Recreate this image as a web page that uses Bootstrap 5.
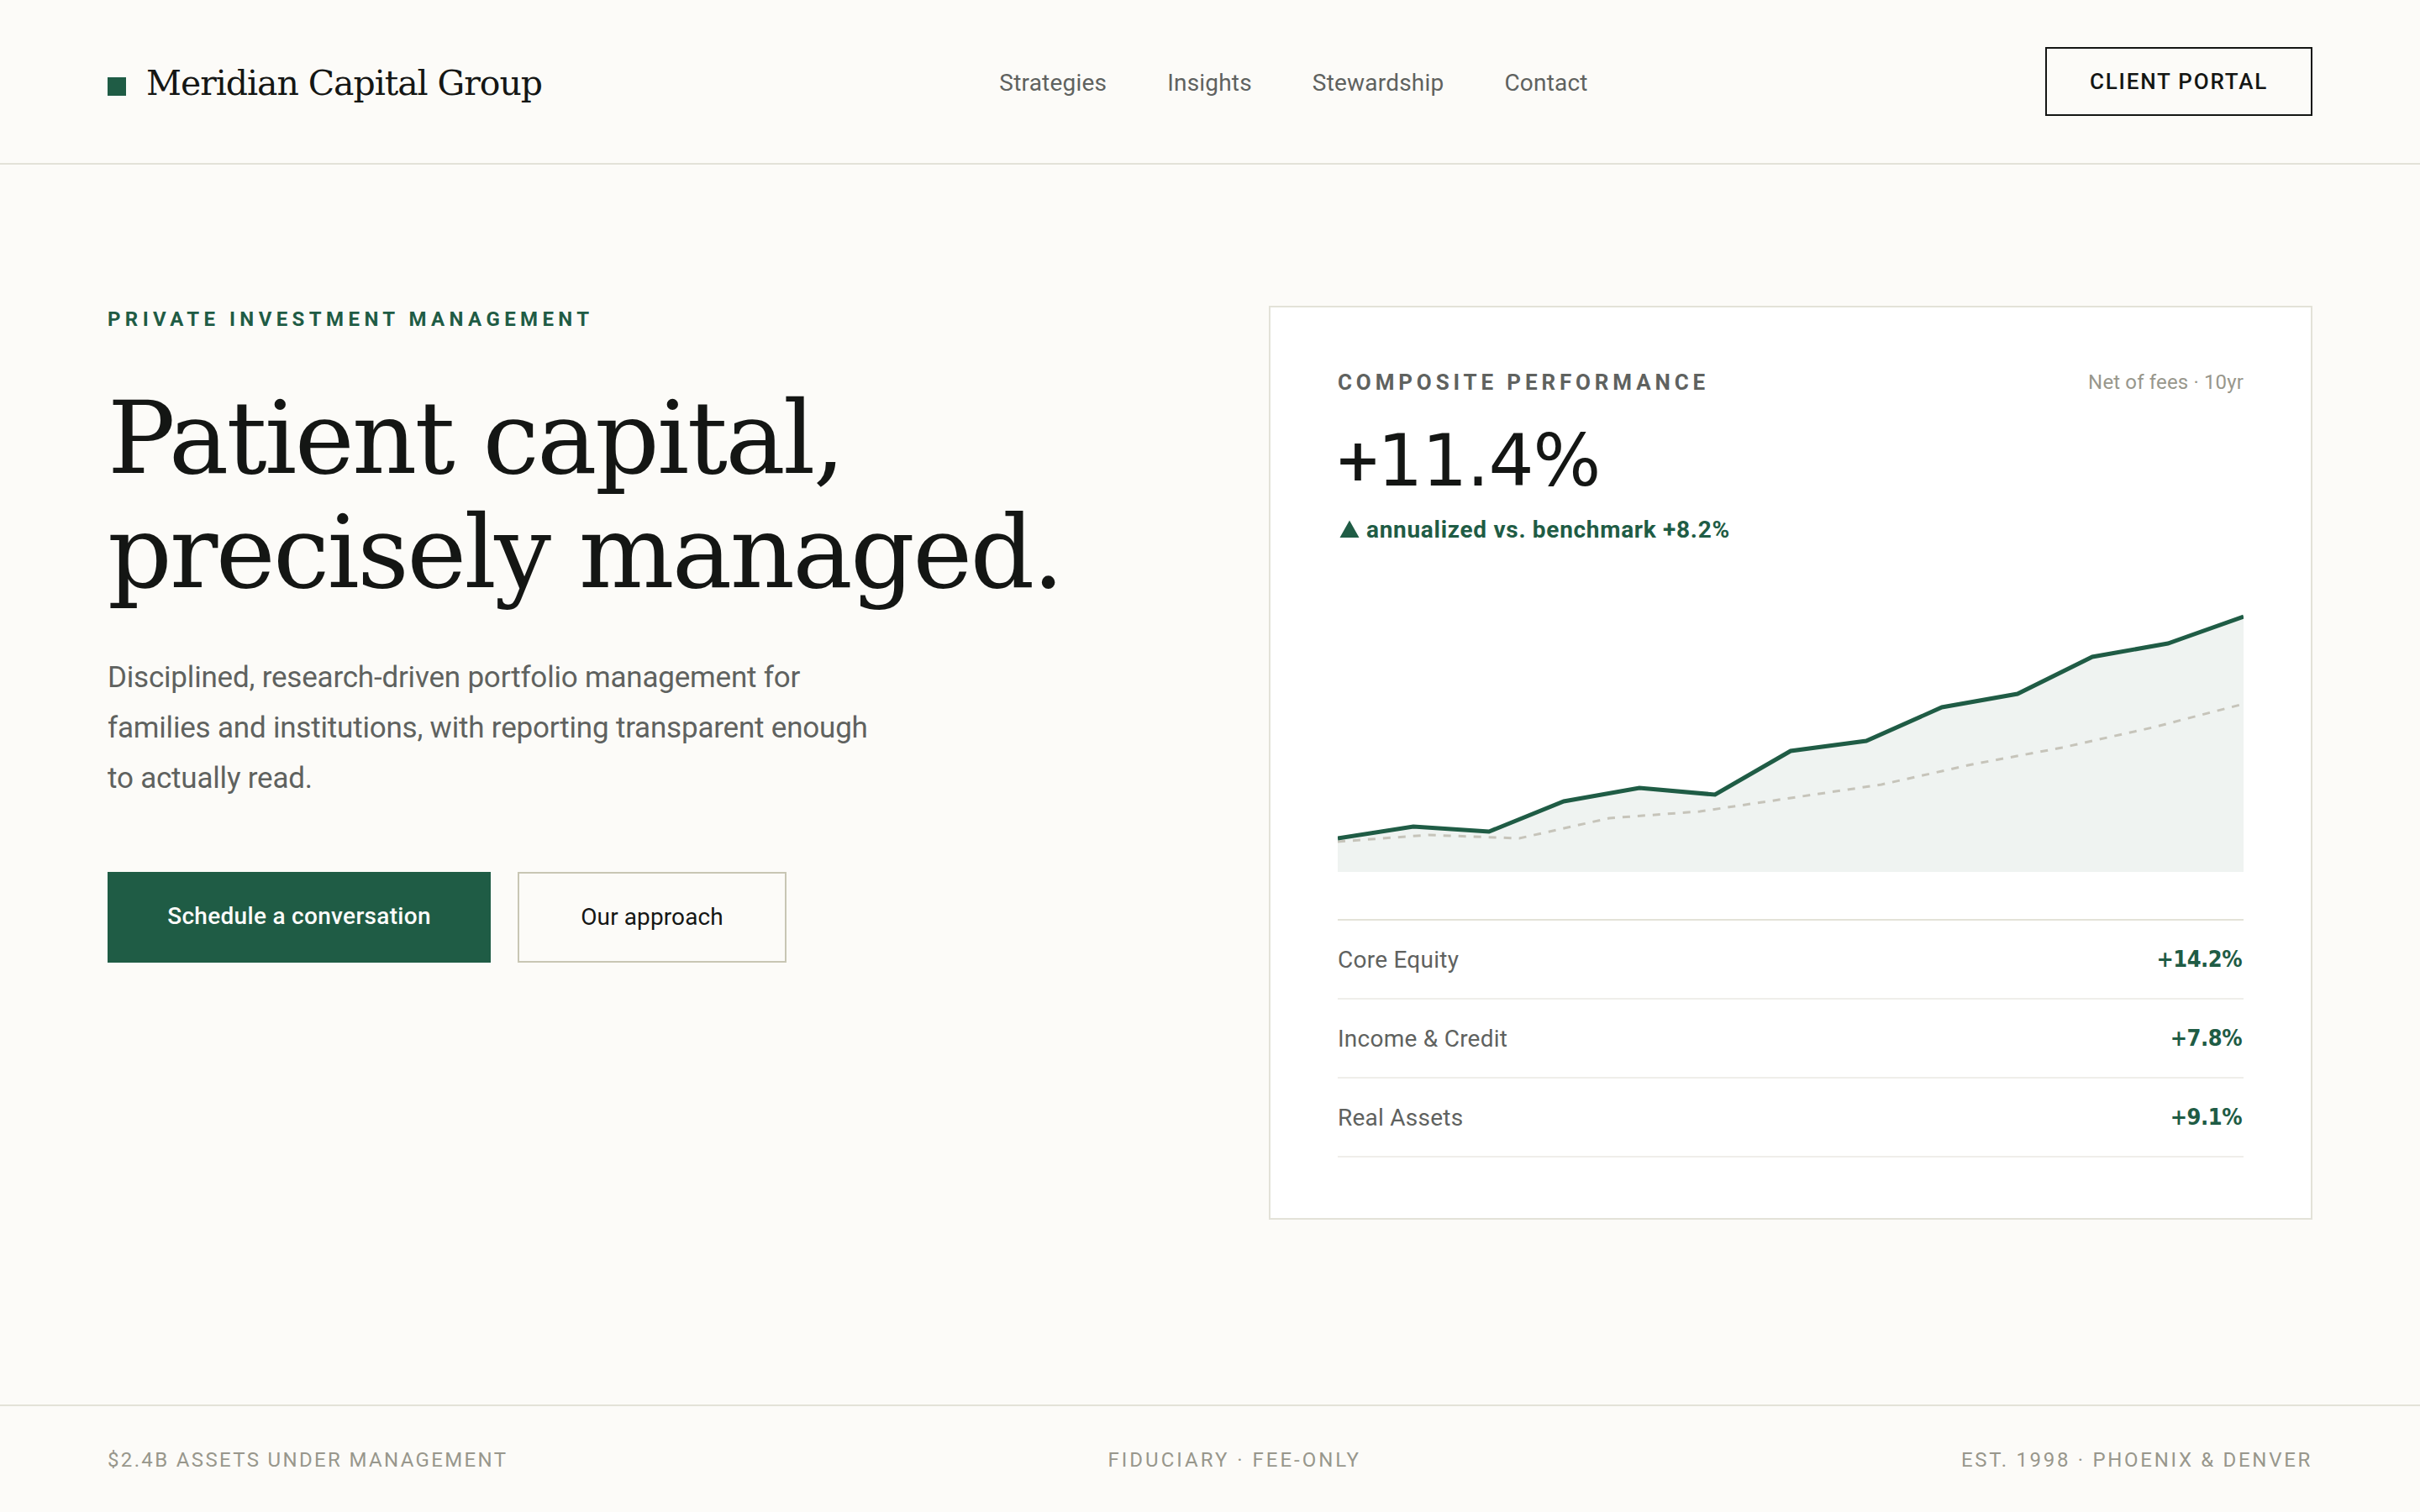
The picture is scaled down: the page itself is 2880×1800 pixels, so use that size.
<!DOCTYPE html>
<html lang="en">
<head>
  <meta charset="UTF-8">
  <meta name="viewport" content="width=device-width, initial-scale=1.0">
  <title>Meridian Capital Group</title>
  <link href="https://cdn.jsdelivr.net/npm/bootstrap@5.3.0/dist/css/bootstrap.min.css" rel="stylesheet">
  <style>
    :root {
      --ink: #141614;
      --muted: #5f625f;
      --faint: #98978c;
      --green: #1f5c45;
      --line: #e3e2d8;
    }
    body {
      font-family: Roboto, "Liberation Sans", sans-serif;
      font-size: 28px;
      color: var(--ink);
      background-color: #fcfbf8;
    }
    .site-header {
      height: 196px;
      padding: 0 128px;
      border-bottom: 2px solid var(--line);
    }
    .brand {
      gap: 24px;
      padding-top: 4px;
      color: var(--ink);
      font-family: "DejaVu Serif", serif;
      font-size: 41px;
      line-height: 50px;
      letter-spacing: -1.05px;
    }
    .brand-square {
      width: 22px;
      height: 22px;
      margin-top: 8px;
      background-color: var(--green);
    }
    .main-nav {
      gap: 72px;
      padding-top: 4px;
    }
    .main-nav a {
      color: var(--muted);
      text-decoration: none;
      letter-spacing: 0.2px;
    }
    .btn {
      border-radius: 0;
      padding: 0;
      border-width: 2px;
    }
    .btn-portal {
      width: 318px;
      height: 82px;
      border-color: var(--ink);
      color: var(--ink);
      font-size: 26px;
      font-weight: 500;
      letter-spacing: 1.8px;
    }
    .hero {
      display: grid;
      grid-template-columns: 1fr 1fr;
      gap: 140px;
      padding: 168px 128px 0;
    }
    .eyebrow {
      margin-bottom: 58px;
      color: var(--green);
      font-size: 24px;
      font-weight: 700;
      line-height: 32px;
      letter-spacing: 5.4px;
    }
    .headline {
      margin-bottom: 51px;
      font-family: "DejaVu Serif", serif;
      font-size: 120px;
      font-weight: 400;
      line-height: 136px;
      letter-spacing: -2.7px;
      white-space: nowrap;
    }
    .intro {
      margin-bottom: 81px;
      color: var(--muted);
      font-size: 35px;
      line-height: 60px;
      letter-spacing: -0.2px;
    }
    .actions {
      gap: 32px;
    }
    .btn-schedule {
      width: 456px;
      height: 108px;
      padding-bottom: 3px;
      background-color: var(--green);
      color: #fcfbf9;
      font-size: 28px;
      font-weight: 500;
      letter-spacing: 0.3px;
    }
    .btn-approach {
      width: 320px;
      height: 108px;
      border-color: #c8c6b4;
      color: var(--ink);
      font-size: 28px;
      letter-spacing: 0.1px;
    }
    .performance {
      padding: 72px 80px;
      border: 2px solid var(--line);
      border-radius: 0;
      background-color: #fff;
    }
    .performance-title {
      color: var(--muted);
      font-size: 26px;
      font-weight: 700;
      line-height: 34px;
      letter-spacing: 4.85px;
    }
    .performance-note {
      color: var(--faint);
      font-size: 24px;
      line-height: 35px;
      letter-spacing: 0.15px;
    }
    .total-return {
      margin-top: 32px;
      font-family: "DejaVu Sans", sans-serif;
      font-size: 85px;
      line-height: 88px;
      letter-spacing: -1px;
    }
    .total-sign {
      font-family: Roboto, sans-serif;
    }
    .versus {
      margin-top: 20px;
      gap: 8px;
      color: var(--green);
      font-weight: 700;
      line-height: 36px;
      letter-spacing: 0.7px;
    }
    .chart {
      width: 1078px;
      height: 360px;
      margin: 29px 0 56px;
    }
    .funds {
      border-top: 2px solid var(--line);
    }
    .fund {
      height: 94px;
      padding-top: 1px;
      border-bottom: 2px solid #efeeea;
    }
    .fund-name {
      color: var(--muted);
      letter-spacing: 0.25px;
    }
    .fund-return {
      margin-right: 2px;
      color: var(--green);
      font-family: "DejaVu Sans Condensed", "DejaVu Sans", sans-serif;
      font-stretch: condensed;
      font-size: 27px;
      font-weight: 700;
      letter-spacing: -0.5px;
    }
    .site-footer {
      height: 128px;
      padding: 2px 128px 0;
      border-top: 2px solid var(--line);
      color: var(--faint);
      font-size: 24px;
      letter-spacing: 2.35px;
    }
    .footer-policy {
      letter-spacing: 3px;
    }
    .footer-place {
      letter-spacing: 2.7px;
    }
  </style>
</head>
<body class="d-flex flex-column min-vh-100">

  <header class="site-header d-flex justify-content-between align-items-center">
    <a href="#" class="brand d-flex align-items-center text-decoration-none">
      <span class="brand-square"></span>
      <span>Meridian Capital Group</span>
    </a>
    <nav class="main-nav d-flex">
      <a href="#">Strategies</a>
      <a href="#">Insights</a>
      <a href="#">Stewardship</a>
      <a href="#">Contact</a>
    </nav>
    <a href="#" class="btn btn-portal d-flex align-items-center justify-content-center">CLIENT PORTAL</a>
  </header>

  <main class="hero flex-grow-1 align-items-start">
    <section>
      <div class="eyebrow">PRIVATE INVESTMENT MANAGEMENT</div>
      <h1 class="headline">Patient capital,<br>precisely managed.</h1>
      <p class="intro">Disciplined, research-driven portfolio management for<br>families and institutions, with reporting transparent enough<br>to actually read.</p>
      <div class="actions d-flex">
        <a href="#" class="btn btn-schedule d-flex align-items-center justify-content-center">Schedule a conversation</a>
        <a href="#" class="btn btn-approach d-flex align-items-center justify-content-center">Our approach</a>
      </div>
    </section>

    <section class="performance card">
      <div class="d-flex justify-content-between">
        <span class="performance-title">COMPOSITE PERFORMANCE</span>
        <span class="performance-note">Net of fees · 10yr</span>
      </div>
      <div class="total-return"><span class="total-sign">+</span>11.4%</div>
      <div class="versus d-flex align-items-center">
        <svg width="26" height="26" viewBox="0 0 26 26"><path d="M2.5 22 14 1.500 25.500 22Z" fill="#1f5c45"/></svg>
        <span>annualized vs. benchmark +8.2%</span>
      </div>

      <!-- Composite (solid) against benchmark (dashed) -->
      <svg class="chart" viewBox="0 0 1078 360">
        <polygon fill="#eff3f1" points="0,320 90,306 180,312 269,276 359,260 449,268 539,216 629,204 719,164 809,148 898,104 988,88 1078,56 1078,360 0,360"/>
        <polyline fill="none" stroke="#c6c4ba" stroke-width="3" stroke-dasharray="9 9" points="0,324 108,316 216,320 323,296 431,288 539,272 647,256 755,232 862,212 970,188 1078,160"/>
        <polyline fill="none" stroke="#1f5c45" stroke-width="5" points="0,320 90,306 180,312 269,276 359,260 449,268 539,216 629,204 719,164 809,148 898,104 988,88 1078,56"/>
      </svg>

      <div class="funds">
        <div class="fund d-flex justify-content-between align-items-center">
          <span class="fund-name">Core Equity</span>
          <span class="fund-return">+14.2%</span>
        </div>
        <div class="fund d-flex justify-content-between align-items-center">
          <span class="fund-name">Income &amp; Credit</span>
          <span class="fund-return">+7.8%</span>
        </div>
        <div class="fund d-flex justify-content-between align-items-center">
          <span class="fund-name">Real Assets</span>
          <span class="fund-return">+9.1%</span>
        </div>
      </div>
    </section>
  </main>

  <footer class="site-footer d-flex justify-content-between align-items-center">
    <span>$2.4B ASSETS UNDER MANAGEMENT</span>
    <span class="footer-policy">FIDUCIARY · FEE-ONLY</span>
    <span class="footer-place">EST. 1998 · PHOENIX &amp; DENVER</span>
  </footer>

  <script src="https://cdn.jsdelivr.net/npm/bootstrap@5.3.0/dist/js/bootstrap.bundle.min.js"></script>
</body>
</html>
